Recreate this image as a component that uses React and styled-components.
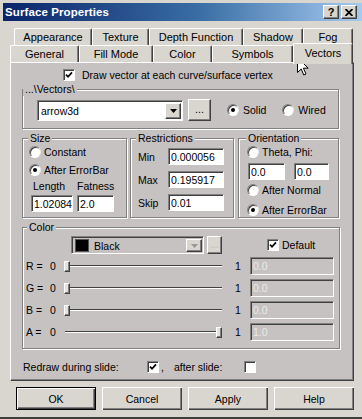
import React from 'react';
import styled, { createGlobalStyle, css } from 'styled-components';

const OUTER = '#d9d5cf';
const PANEL = '#c6c2c2';
const SH = '#808080';
const DK = '#404040';

const Global = createGlobalStyle`
  html, body { margin: 0; padding: 0; background: ${OUTER}; }
  body { font-family: "Liberation Sans", Arial, sans-serif; font-size: 10.5px; color: #000; }
  * { box-sizing: border-box; }
`;

const Window = styled.div`
  position: relative;
  width: 362px;
  height: 419px;
  overflow: hidden;
  background: ${OUTER};
  padding: 3px 0 0 3px;
  display: flex;
  flex-direction: column;
  box-shadow: inset 0 -2px 0 ${DK};
`;

const TitleBar = styled.div`
  height: 18px;
  flex: none;
  display: flex;
  align-items: center;
  padding: 0 5px 0 2px;
  background: linear-gradient(90deg, #0a246a 0%, #3a6ea5 55%, #a6caf0 100%);
`;

const TitleText = styled.span`
  color: #fff;
  font-weight: bold;
  font-size: 11.5px;
  letter-spacing: 0.1px;
`;

const TitleButtons = styled.div`
  margin-left: auto;
  display: flex;
  gap: 2px;
`;

const TitleBtn = styled.span`
  width: 16px;
  height: 14px;
  background: ${OUTER};
  border: 1px solid;
  border-color: #fff ${DK} ${DK} #fff;
  box-shadow: inset -1px -1px 0 ${SH};
  display: flex;
  align-items: center;
  justify-content: center;
  font-weight: bold;
  font-size: 11px;
  line-height: 1;
`;

const TabStrip = styled.div`
  margin-top: 7px;
  display: flex;
  flex-direction: column;
  flex: none;
`;

const TabRow = styled.div`
  display: flex;
  height: 17px;
  margin-left: ${p => p.$indent}px;
  position: relative;
  z-index: ${p => (p.$front ? 2 : 1)};
`;

const Tab = styled.div`
  width: ${p => p.$w}px;
  flex: none;
  height: ${p => (p.$active ? 21 : 17)}px;
  margin-top: ${p => (p.$active ? -2 : 0)}px;
  padding-bottom: ${p => (p.$active ? 3 : 0)}px;
  position: relative;
  z-index: ${p => (p.$active ? 3 : 0)};
  display: flex;
  align-items: center;
  justify-content: center;
  font-size: 11px;
  background: ${OUTER};
  border-top: 1px solid #fff;
  border-left: 1px solid #fff;
  border-right: 1px solid ${DK};
  border-radius: 2px 2px 0 0;
  box-shadow: inset -1px 0 0 ${SH};
`;

const Panel = styled.div`
  margin-left: 7px;
  width: 344px;
  height: 319px;
  flex: none;
  background: ${PANEL};
  border-top: 1px solid #fff;
  border-left: 1px solid #fff;
  border-right: 1px solid ${DK};
  border-bottom: 1px solid ${DK};
  box-shadow: inset -1px -1px 0 ${SH};
  padding-left: 11px;
  display: flex;
  flex-direction: column;
`;

const Row = styled.div`
  display: flex;
  align-items: center;
  flex: none;
  height: ${p => p.$h || 13}px;
  margin-top: ${p => p.$mt || 0}px;
  margin-left: ${p => p.$ml || 0}px;
  gap: ${p => (p.$gap === undefined ? 3 : p.$gap)}px;
`;

const Text = styled.span`
  white-space: nowrap;
  margin-left: ${p => p.$ml || 0}px;
  width: ${p => (p.$w ? `${p.$w}px` : 'auto')};
  flex: none;
`;

const Group = styled.div`
  width: ${p => p.$w}px;
  height: ${p => p.$h}px;
  flex: none;
  margin-top: ${p => p.$mt || 0}px;
  border: 1px solid ${SH};
  box-shadow: inset 1px 1px 0 #fff, 1px 1px 0 #fff;
  display: flex;
  flex-direction: column;
`;

const Legend = styled.span`
  align-self: flex-start;
  height: 13px;
  line-height: 13px;
  margin: -7px 0 0 ${p => p.$x || 0}px;
  padding: 0 2px;
  background: ${PANEL};
  white-space: nowrap;
`;

const GroupRow = styled.div`
  display: flex;
  margin-top: 9px;
  flex: none;
`;

const CheckBox = styled.span`
  width: 12px;
  height: 12px;
  flex: none;
  background: #fff;
  border: 1px solid;
  border-color: ${SH} #fff #fff ${SH};
  box-shadow: inset 1px 1px 0 ${DK};
  display: flex;
  align-items: center;
  justify-content: center;
  margin-left: ${p => p.$ml || 0}px;
`;

function Check({ checked, ml }) {
  return (
    <CheckBox $ml={ml}>
      {checked && (
        <svg width="8" height="8" viewBox="0 0 8 8">
          <path d="M1 3.6 L3 5.8 L7 1.4" stroke="#000" strokeWidth="1.7" fill="none" />
        </svg>
      )}
    </CheckBox>
  );
}

const RadioDot = styled.span`
  width: 12px;
  height: 12px;
  flex: none;
  border-radius: 50%;
  background: #fff;
  border: 1px solid;
  border-color: ${SH} #e8e8e8 #fff ${SH};
  box-shadow: inset 1px 1px 0 ${DK};
  display: flex;
  align-items: center;
  justify-content: center;
  margin-left: ${p => p.$ml || 0}px;
  &::after {
    content: '';
    width: 4px;
    height: 4px;
    border-radius: 50%;
    background: ${p => (p.$on ? '#000' : 'transparent')};
  }
`;

const Field = styled.input`
  width: ${p => p.$w}px;
  height: ${p => p.$h || 17}px;
  flex: none;
  margin: 0;
  padding: 0 0 0 2px;
  font: 10.5px "Liberation Sans", Arial, sans-serif;
  background: ${p => (p.$disabled ? PANEL : '#fff')};
  color: ${p => (p.$disabled ? '#eaeaea' : '#000')};
  border: 1px solid;
  border-color: ${SH} #fff #fff ${SH};
  box-shadow: inset 1px 1px 0 ${DK};
  outline: none;
  margin-left: ${p => p.$ml || 0}px;
`;

const Combo = styled.div`
  width: ${p => p.$w}px;
  height: ${p => p.$h}px;
  flex: none;
  display: flex;
  align-items: stretch;
  background: ${p => (p.$grey ? PANEL : '#fff')};
  border: 1px solid;
  border-color: ${SH} #fff #fff ${SH};
  box-shadow: inset 1px 1px 0 ${DK};
  padding: 2px 1px 1px 2px;
`;

const ComboText = styled.span`
  flex: 1;
  display: flex;
  align-items: center;
  gap: 5px;
  padding-left: 1px;
`;

const Swatch = styled.span`
  width: 14px;
  height: 13px;
  background: #000;
  border: 1px solid #555;
`;

const DropBtn = styled.span`
  width: 16px;
  flex: none;
  background: ${OUTER};
  border: 1px solid;
  border-color: #fff ${DK} ${DK} #fff;
  box-shadow: inset -1px -1px 0 ${SH};
  display: flex;
  align-items: center;
  justify-content: center;
`;

const SmallBtn = styled.span`
  width: ${p => p.$w}px;
  height: ${p => p.$h}px;
  flex: none;
  margin-left: ${p => p.$ml || 0}px;
  background: ${OUTER};
  border: 1px solid;
  border-color: #fff ${DK} ${DK} #fff;
  box-shadow: inset -1px -1px 0 ${SH};
  display: flex;
  align-items: center;
  justify-content: center;
  color: ${p => (p.$faint ? '#bdbab8' : '#000')};
  padding-bottom: 2px;
`;

const SizeGrid = styled.div`
  display: grid;
  grid-template-columns: 42px 37px;
  column-gap: 4px;
  row-gap: 2px;
  margin: 4px 0 0 8px;
`;

const GridLabel = styled.span`
  height: 13px;
  line-height: 13px;
  padding-left: ${p => p.$pl || 0}px;
`;

const RestrictGrid = styled.div`
  display: grid;
  grid-template-columns: 30px 56px;
  grid-auto-rows: 17px;
  row-gap: 6px;
  align-items: center;
  margin: 3px 0 0 7px;
`;

const SliderRow = styled.div`
  display: grid;
  grid-template-columns: 24px 14px 158px 28px 84px;
  align-items: center;
  height: 18px;
  margin: ${p => p.$mt}px 0 0 3px;
  flex: none;
`;

const SliderBox = styled.div`
  position: relative;
  height: 13px;
  display: flex;
  align-items: center;
`;

const Groove = styled.div`
  flex: 1;
  margin-left: 1px;
  height: 2px;
  border-top: 1px solid ${DK};
  border-bottom: 1px solid #fff;
`;

const Thumb = styled.div`
  position: absolute;
  top: 1px;
  width: 6px;
  height: 11px;
  background: #e4e2df;
  border: 1px solid;
  border-color: #fff ${DK} ${DK} #fff;
  box-shadow: inset -1px -1px 0 ${SH};
`;

function Slider({ value }) {
  return (
    <SliderBox>
      <Groove />
      <Thumb style={{ left: `${value * 152}px` }} />
    </SliderBox>
  );
}

const One = styled.span`
  padding-left: 13px;
`;

const ButtonRow = styled.div`
  display: flex;
  gap: 6px;
  margin: 6px 0 0 13px;
  flex: none;
`;

const Btn = styled.button`
  width: 80px;
  height: 23px;
  margin: 0;
  padding: 0;
  font: 10.5px "Liberation Sans", Arial, sans-serif;
  color: #000;
  background: ${OUTER};
  border: none;
  box-shadow: inset 1px 1px 0 #fff, inset -1px -1px 0 ${DK}, inset -2px -2px 0 ${SH};
  ${p =>
    p.$default &&
    css`
      border: 1px solid #000;
    `}
`;

const Cursor = styled.svg`
  position: absolute;
  left: 297px;
  top: 57px;
`;

const ArrowDown = ({ color = '#000' }) => (
  <svg width="7" height="4" viewBox="0 0 7 4">
    <path d="M0 0 H7 L3.5 4 Z" fill={color} />
  </svg>
);

const tabsBack = [
  ['Appearance', 78],
  ['Texture', 57],
  ['Depth Function', 94],
  ['Shadow', 60],
  ['Fog', 50],
];
const tabsFront = [
  ['General', 69],
  ['Fill Mode', 74],
  ['Color', 59],
  ['Symbols', 81],
  ['Vectors', 60, true],
];

const sliders = [
  ['R =', 0, '0.0'],
  ['G =', 0, '0.0'],
  ['B =', 0, '0.0'],
  ['A =', 1, '1.0'],
];

export default function App() {
  return (
    <>
      <Global />
      <Window>
        <TitleBar>
          <TitleText>Surface Properties</TitleText>
          <TitleButtons>
            <TitleBtn>?</TitleBtn>
            <TitleBtn>
              <svg width="8" height="7" viewBox="0 0 8 7">
                <path d="M0.5 0 L7.5 7 M7.5 0 L0.5 7" stroke="#000" strokeWidth="1.8" />
              </svg>
            </TitleBtn>
          </TitleButtons>
        </TitleBar>

        <TabStrip>
          <TabRow $indent={11}>
            {tabsBack.map(([t, w]) => (
              <Tab key={t} $w={w}>{t}</Tab>
            ))}
          </TabRow>
          <TabRow $indent={7} $front>
            {tabsFront.map(([t, w, a]) => (
              <Tab key={t} $w={w} $active={a}>{t}</Tab>
            ))}
          </TabRow>
        </TabStrip>

        <Panel>
          <Row $mt={6} $h={12} $ml={41} $gap={7}>
            <Check checked />
            <Text>Draw vector at each curve/surface vertex</Text>
          </Row>

          <Group $w={317} $h={40} $mt={8}>
            <Legend $x={0}>...\Vectors\</Legend>
            <Row $mt={3} $h={22} $ml={14} $gap={0}>
              <Combo $w={146} $h={21}>
                <ComboText>arrow3d</ComboText>
                <DropBtn><ArrowDown /></DropBtn>
              </Combo>
              <SmallBtn $w={23} $h={22} $ml={5}>...</SmallBtn>
              <RadioDot $on $ml={16} />
              <Text $ml={4}>Solid</Text>
              <RadioDot $ml={16} />
              <Text $ml={4}>Wired</Text>
            </Row>
          </Group>

          <GroupRow>
            <Group $w={105} $h={80}>
              <Legend $x={5}>Size</Legend>
              <Row $ml={6}>
                <RadioDot />
                <Text>Constant</Text>
              </Row>
              <Row $ml={6} $mt={5}>
                <RadioDot $on />
                <Text>After ErrorBar</Text>
              </Row>
              <SizeGrid>
                <GridLabel $pl={2}>Length</GridLabel>
                <GridLabel>Fatness</GridLabel>
                <Field $w={42} readOnly value="1.02084" />
                <Field $w={37} readOnly value="2.0" />
              </SizeGrid>
            </Group>

            <Group $w={104} $h={80} style={{ marginLeft: 3 }}>
              <Legend $x={5}>Restrictions</Legend>
              <RestrictGrid>
                <span>Min</span>
                <Field $w={56} readOnly value="0.000056" />
                <span>Max</span>
                <Field $w={56} readOnly value="0.195917" />
                <span>Skip</span>
                <Field $w={56} readOnly value="0.01" />
              </RestrictGrid>
            </Group>

            <Group $w={101} $h={80} style={{ marginLeft: 4 }}>
              <Legend $x={7}>Orientation</Legend>
              <Row $ml={8}>
                <RadioDot />
                <Text>Theta, Phi:</Text>
              </Row>
              <Row $ml={9} $mt={5} $h={17} $gap={9}>
                <Field $w={37} readOnly value="0.0" />
                <Field $w={35} readOnly value="0.0" />
              </Row>
              <Row $ml={8} $mt={3}>
                <RadioDot />
                <Text>After Normal</Text>
              </Row>
              <Row $ml={8} $mt={7}>
                <RadioDot $on />
                <Text>After ErrorBar</Text>
              </Row>
            </Group>
          </GroupRow>

          <Group $w={318} $h={122} $mt={9}>
            <Legend $x={4}>Color</Legend>
            <Row $mt={2} $h={18} $ml={48} $gap={0}>
              <Combo $w={133} $h={18} $grey>
                <ComboText>
                  <Swatch />
                  Black
                </ComboText>
                <DropBtn><ArrowDown color="#9a9696" /></DropBtn>
              </Combo>
              <SmallBtn $w={15} $h={18} $ml={3} $faint>...</SmallBtn>
              <Check checked ml={45} />
              <Text $ml={3}>Default</Text>
            </Row>
            {sliders.map(([l, v, t], i) => (
              <SliderRow key={l} $mt={i === 0 ? 3 : 4}>
                <span>{l}</span>
                <span>0</span>
                <Slider value={v} />
                <One>1</One>
                <Field $w={84} $h={18} $disabled readOnly value={t} />
              </SliderRow>
            ))}
          </Group>

          <Row $mt={11} $ml={1} $gap={0}>
            <Text $w={124}>Redraw during slide:</Text>
            <Check checked />
            <Text $ml={2}>,</Text>
            <Text $ml={10}>after slide:</Text>
            <Check ml={22} />
          </Row>
        </Panel>

        <ButtonRow>
          <Btn $default>OK</Btn>
          <Btn>Cancel</Btn>
          <Btn>Apply</Btn>
          <Btn>Help</Btn>
        </ButtonRow>

        <Cursor width="12" height="19" viewBox="0 0 12 19">
          <path d="M0.5 0.5 L0.5 15.5 L4.2 12 L6.8 18 L9 17 L6.4 11.2 L11.2 11.2 Z" fill="#fff" stroke="#000" strokeWidth="1" />
        </Cursor>
      </Window>
    </>
  );
}
